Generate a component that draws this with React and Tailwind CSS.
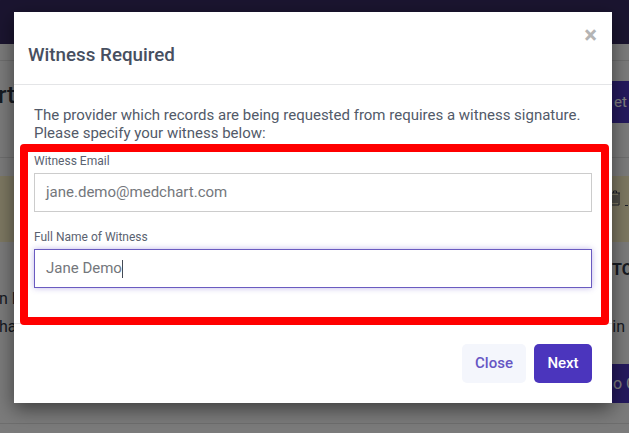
const Field = ({ label, value, focused, className }) => (
  <div className={className}>
    <div className="text-[12px] leading-[14px] text-[#5a6270]">{label}</div>
    <div
      className={
        "mt-[5px] h-[39px] flex items-center px-[11px] text-[15px] text-[#74777c] border " +
        (focused
          ? "border-[#6a5bc0] shadow-[0_0_6px_rgba(75,53,189,0.35)]"
          : "border-[#cccccc]")
      }
    >
      <span>{value}</span>
      {focused && <span className="w-px h-[18px] bg-[#444a55]"></span>}
    </div>
  </div>
);

const Background = () => (
  <div className="h-[433px] overflow-hidden bg-[#f6f7f6] text-[#2f3644]">
    <div className="h-[44px] bg-[#362a60]"></div>
    <div className="h-[17px] border-b border-[#dcdcdc]"></div>
    <div className="h-[97px] border-b border-[#dcdcdc] flex items-center justify-between">
      <div className="text-[24px] font-medium -ml-[2px] mb-[29px]">rt</div>
      <div className="h-[42px] mb-[14px] w-[17px] pl-[2px] bg-[#4b35bd] text-white text-[15px] leading-[42px] overflow-hidden whitespace-pre">
        et Help
      </div>
    </div>
    <div className="mt-[18px] h-[66px] bg-[#faf1c4] flex justify-end items-start pt-[14px]">
      <svg width="10" height="16" viewBox="0 0 10 16" fill="none" stroke="#3a4152" strokeWidth="1">
        <path d="M0 3h10M3.5 3V1h3v2M1 3v12h8V3M3 5v8M5 5v8M7 5v8" />
      </svg>
      <div className="w-[3px] h-px mt-[15px] ml-[5px] mr-px bg-[#3a4152]"></div>
    </div>
    <div className="flex justify-end pt-[16px] h-[46px]">
      <span className="text-[16px] font-bold whitespace-nowrap w-[17px] overflow-hidden">TOTAL</span>
    </div>
    <div className="text-[16px] leading-[20px] -ml-[1px] pt-[1px] whitespace-nowrap">n F</div>
    <div className="flex justify-between text-[16px] leading-[20px] mt-[8px]">
      <span className="-ml-[1px]">ha</span>
      <span className="mr-[4px]">in</span>
    </div>
    <div className="flex justify-end mt-[27px]">
      <div className="h-[39px] w-[17px] bg-[#4b35bd] text-white text-[16px] leading-[39px] whitespace-nowrap overflow-hidden pl-[1px]">
        o C
      </div>
    </div>
    <div className="mt-[20px] border-t border-[#dcdcdc]"></div>
  </div>
);

export default function App() {
  return (
    <div className="relative w-[629px] h-[433px] overflow-hidden font-['Roboto',sans-serif]">
      <Background />
      <div className="absolute inset-0 bg-black/50"></div>

      <div className="absolute left-[14px] top-[12px] w-[598px] h-[391px] bg-white flex flex-col shadow-[0_6px_18px_rgba(0,0,0,0.5)]">
        <div className="h-[73px] shrink-0 border-b border-[#e4e5e7] flex items-start justify-between pl-[14px] pr-[15px]">
          <h1 className="mt-[30px] text-[18.8px] leading-[26px] font-medium text-[#474f5f]">
            Witness Required
          </h1>
          <span className="mt-[11px] text-[24px] leading-[24px] font-bold text-[#b4b4b4]">×</span>
        </div>

        <div className="flex-1 pt-[21px] px-[20px]">
          <p className="text-[15px] leading-[18px] text-[#525a69]">
            The provider which records are being requested from requires a witness signature.
            <br />
            Please specify your witness below:
          </p>
          <Field className="mt-[12px]" label="Witness Email" value="jane.demo@medchart.com" />
          <Field className="mt-[18px]" label="Full Name of Witness" value="Jane Demo" focused />
        </div>

        <div className="h-[80px] shrink-0 border-t border-[#e4e5e7] flex items-start justify-end gap-[8px] pt-[20px] pr-[20px]">
          <button className="h-[39px] w-[64px] rounded-[5px] bg-[#f4f6fc] text-[15px] font-medium text-[#6656c4]">
            Close
          </button>
          <button className="h-[39px] w-[58px] rounded-[5px] bg-[#4b35bd] text-[15px] font-medium text-white">
            Next
          </button>
        </div>
      </div>

      {/* red annotation drawn over the form */}
      <div className="absolute left-[20px] top-[144px] w-[589px] h-[181px] border-[8px] border-[#ff0000] rounded-[4px]"></div>
    </div>
  );
}
